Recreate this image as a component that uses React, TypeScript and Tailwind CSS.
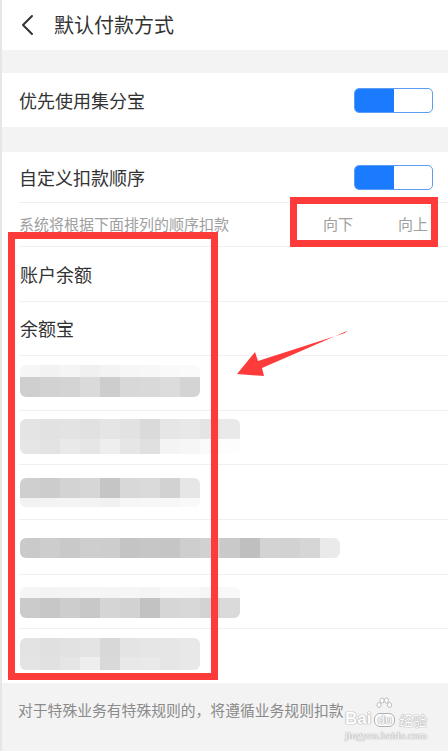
import React from "react";

type Cell = string;

const Mosaic = ({
  top,
  bottom,
  topH,
  bottomH,
}: {
  top: Cell[];
  bottom: Cell[];
  topH: string;
  bottomH: string;
}) => (
  <div className="flex flex-col rounded-[6px] overflow-hidden">
    <div className={`flex ${topH}`}>
      {top.map((c, i) => (
        <div key={i} className={`w-[20px] h-full ${c}`} />
      ))}
    </div>
    <div className={`flex ${bottomH}`}>
      {bottom.map((c, i) => (
        <div key={i} className={`w-[20px] h-full ${c}`} />
      ))}
    </div>
  </div>
);

const Toggle = () => (
  <div className="w-[79px] h-[25px] rounded-[5px] border border-[#5b9cf5] bg-white flex overflow-hidden">
    <div className="w-[39px] h-full bg-[#1a7bff]" />
  </div>
);

const rows: { label?: string; mosaic?: React.ReactNode }[] = [
  { label: "账户余额" },
  { label: "余额宝" },
  {
    mosaic: (
      <div className="mt-[9px]">
        <Mosaic
          topH="h-[12px]"
          bottomH="h-[20px]"
          top={["bg-[#f6f6f6]", "bg-[#f2f2f2]", "bg-[#f5f5f5]", "bg-[#f0f0f0]", "bg-[#f3f3f3]", "bg-[#f6f6f6]", "bg-[#f7f7f7]", "bg-[#f9f9f9]", "bg-[#fafafa]"]}
          bottom={["bg-[#cfcfcf]", "bg-[#d2d2d2]", "bg-[#d4d4d4]", "bg-[#dadada]", "bg-[#cdcdcd]", "bg-[#d8d8d8]", "bg-[#d9d9d9]", "bg-[#dcdcdc]", "bg-[#d4d4d4]"]}
        />
      </div>
    ),
  },
  {
    mosaic: (
      <div className="mt-[8px]">
        <Mosaic
          topH="h-[20px]"
          bottomH="h-[15px]"
          top={["bg-[#e4e4e4]", "bg-[#e2e2e2]", "bg-[#e3e3e3]", "bg-[#e1e1e1]", "bg-[#e5e5e5]", "bg-[#e2e2e2]", "bg-[#dadada]", "bg-[#e6e6e6]", "bg-[#e8e8e8]", "bg-[#e4e4e4]", "bg-[#e9e9e9]"]}
          bottom={["bg-[#e6e6e6]", "bg-[#e3e3e3]", "bg-[#e9e9e9]", "bg-[#e6e6e6]", "bg-[#eeeeee]", "bg-[#e6e6e6]", "bg-[#e0e0e0]", "bg-[#f4f4f4]", "bg-[#f6f6f6]", "bg-[#fafafa]", "bg-[#fdfdfd]"]}
        />
      </div>
    ),
  },
  {
    mosaic: (
      <div className="mt-[13px]">
        <Mosaic
          topH="h-[20px]"
          bottomH="h-[9px]"
          top={["bg-[#cfcfcf]", "bg-[#cccccc]", "bg-[#d3d3d3]", "bg-[#d6d6d6]", "bg-[#c5c5c5]", "bg-[#d8d8d8]", "bg-[#dadada]", "bg-[#d2d2d2]", "bg-[#e6e6e6]"]}
          bottom={["bg-[#f2f2f2]", "bg-[#f3f3f3]", "bg-[#f4f4f4]", "bg-[#f3f3f3]", "bg-[#f1f1f1]", "bg-[#f6f6f6]", "bg-[#f7f7f7]", "bg-[#f7f7f7]", "bg-[#f9f9f9]"]}
        />
      </div>
    ),
  },
  {
    mosaic: (
      <div className="mt-[18px]">
        <Mosaic
          topH="h-[20px]"
          bottomH="h-0"
          top={["bg-[#cacaca]", "bg-[#cdcdcd]", "bg-[#c9c9c9]", "bg-[#cecece]", "bg-[#cdcdcd]", "bg-[#c4c4c4]", "bg-[#c6c6c6]", "bg-[#c5c5c5]", "bg-[#cecece]", "bg-[#d1d1d1]", "bg-[#c9c9c9]", "bg-[#bfbfbf]", "bg-[#d3d3d3]", "bg-[#d2d2d2]", "bg-[#d6d6d6]", "bg-[#eaeaea]"]}
          bottom={[]}
        />
      </div>
    ),
  },
  {
    mosaic: (
      <div className="mt-[12px]">
        <Mosaic
          topH="h-[11px]"
          bottomH="h-[20px]"
          top={["bg-[#f6f6f6]", "bg-[#f3f3f3]", "bg-[#f4f4f4]", "bg-[#f6f6f6]", "bg-[#f5f5f5]", "bg-[#f6f6f6]", "bg-[#f4f4f4]", "bg-[#f8f8f8]", "bg-[#f8f8f8]", "bg-[#f6f6f6]", "bg-[#f8f8f8]"]}
          bottom={["bg-[#cbcbcb]", "bg-[#c7c7c7]", "bg-[#cdcdcd]", "bg-[#c8c8c8]", "bg-[#d5d5d5]", "bg-[#d2d2d2]", "bg-[#c2c2c2]", "bg-[#d6d6d6]", "bg-[#d8d8d8]", "bg-[#d3d3d3]", "bg-[#dadada]"]}
        />
      </div>
    ),
  },
  {
    mosaic: (
      <div className="mt-[9px]">
        <Mosaic
          topH="h-[19px]"
          bottomH="h-[13px]"
          top={["bg-[#e3e3e3]", "bg-[#e0e0e0]", "bg-[#e2e2e2]", "bg-[#e4e4e4]", "bg-[#d8d8d8]", "bg-[#e4e4e4]", "bg-[#e6e6e6]", "bg-[#e6e6e6]", "bg-[#e8e8e8]"]}
          bottom={["bg-[#e4e4e4]", "bg-[#e1e1e1]", "bg-[#e5e5e5]", "bg-[#eeeeee]", "bg-[#d9d9d9]", "bg-[#e8e8e8]", "bg-[#e9e9e9]", "bg-[#e6e6e6]", "bg-[#e8e8e8]"]}
        />
      </div>
    ),
  },
];

const outline = "0 0 1px #aaa, 0 0 1px #aaa, 0 0 1px #aaa";

export default function App() {
  return (
    <div
      className="relative w-[448px] h-[751px] overflow-hidden bg-white text-[#333]"
      style={{ fontFamily: '"Noto Sans CJK SC", "Noto Sans", sans-serif' }}
    >
      <div className="flex flex-col border-l-2 border-[#e6e6e6] h-full">
        {/* header */}
        <div className="h-[50px] flex items-center pl-[18px]">
          <svg width="16" height="22" viewBox="0 0 16 22" className="mr-[18px]">
            <polyline points="12,2 3,11 12,20" fill="none" stroke="#333" strokeWidth="2" strokeLinecap="round" strokeLinejoin="round" />
          </svg>
          <span className="text-[20px] leading-none text-[#333]">默认付款方式</span>
        </div>
        <div className="h-[23px] bg-[#f3f3f3]" />
        <div className="h-[54px] flex items-center justify-between pl-[17px] pr-[15px]">
          <span className="text-[18px] leading-none">优先使用集分宝</span>
          <Toggle />
        </div>
        <div className="h-[25px] bg-[#f3f3f3]" />
        <div className="h-[50px] flex items-center justify-between pl-[17px] pr-[15px]">
          <span className="text-[18px] leading-none">自定义扣款顺序</span>
          <Toggle />
        </div>
        <div className="ml-[17px] h-px bg-[#efefef]" />
        <div className="h-[43px] flex items-center pl-[17px] pr-[20px] text-[15px] text-[#a0a0a0]">
          <span className="flex-1">系统将根据下面排列的顺序扣款</span>
          <span className="mr-[45px]">向下</span>
          <span>向上</span>
        </div>
        {rows.map((r, i) => (
          <div key={i} className="flex flex-col">
            <div className="ml-[17px] h-px bg-[#f0f0f0]" />
            <div className="h-[53.6px] pl-[18px]">
              {r.label ? (
                <div className="h-full flex items-center text-[18px] leading-none">{r.label}</div>
              ) : (
                <div className="flex">{r.mosaic}</div>
              )}
            </div>
          </div>
        ))}
        <div className="flex-1 bg-[#f3f3f3] pl-[16px] pt-[14px]">
          <span className="text-[14.8px] text-[#8a8a8a]">对于特殊业务有特殊规则的，将遵循业务规则扣款</span>
        </div>
      </div>

      {/* Baidu watermark */}
      <div className="absolute left-[345px] top-[697px] w-[88px] h-[46px]">
        <svg className="absolute left-[31px] top-0" width="16" height="13" viewBox="0 0 16 13">
          <g fill="#fff" stroke="#b0b0b0" strokeWidth="0.8">
            <ellipse cx="3" cy="8" rx="2" ry="2.6" />
            <ellipse cx="6" cy="3.5" rx="2" ry="2.6" />
            <ellipse cx="10.5" cy="3.5" rx="2" ry="2.6" />
            <ellipse cx="13.5" cy="8" rx="2" ry="2.6" />
          </g>
        </svg>
        <div
          className="absolute left-0 top-[13px] h-[17px] flex items-end leading-none font-bold text-white"
          style={{ fontFamily: '"Liberation Sans", sans-serif', textShadow: outline }}
        >
          <span className="text-[17px] leading-none">Bai</span>
          <span className="ml-[3px] text-[12px] leading-none px-[2px] rounded-[6px] border border-[#b0b0b0] bg-white text-[#f3f3f3]">du</span>
          <span
            className="ml-[4px] text-[14px] leading-none font-normal"
            style={{ fontFamily: '"Noto Sans CJK SC", sans-serif' }}
          >
            经验
          </span>
        </div>
        <div
          className="absolute left-0 top-[33px] text-[11px] leading-none text-white"
          style={{ fontFamily: '"Liberation Serif", serif', textShadow: outline }}
        >
          jingyan.baidu.com
        </div>
      </div>

      {/* red annotation boxes */}
      <div className="absolute left-[290px] top-[197px] w-[148px] h-[50px] border-[7px] border-[#fe3b3b]" />
      <div className="absolute left-[8px] top-[232px] w-[210px] h-[448px] border-[7px] border-[#fe3b3b]" />

      {/* red arrow */}
      <svg className="absolute left-0 top-0" width="448" height="751" viewBox="0 0 448 751">
        <polygon points="347,331 262,368 264,376 237,374 255,352 258,361 345,333" fill="#fe3b3b" />
      </svg>
    </div>
  );
}
